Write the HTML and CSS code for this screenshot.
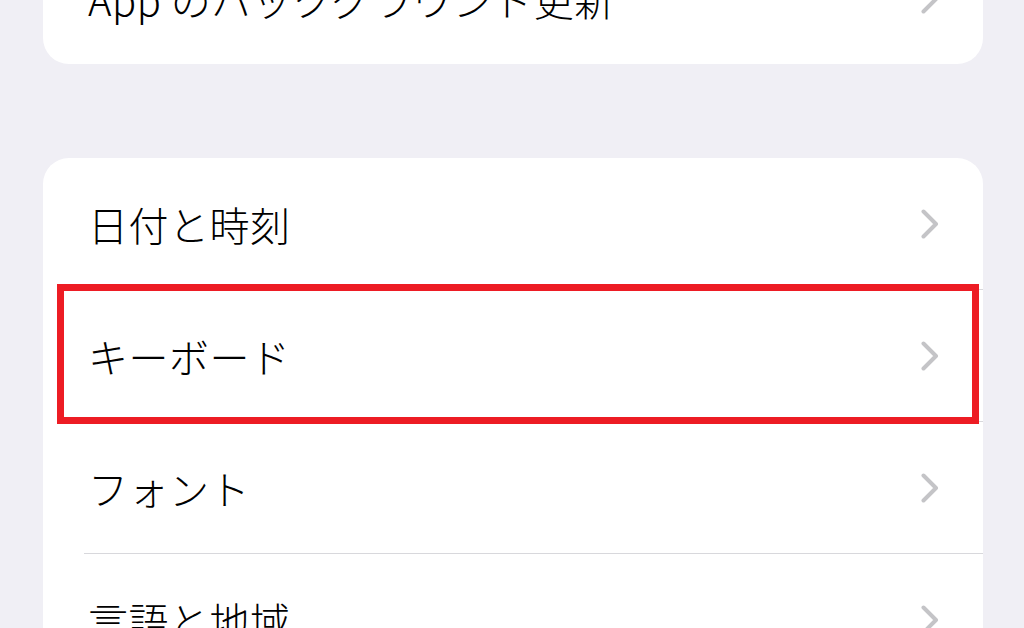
FILE: index.html
```html
<!DOCTYPE html>
<html lang="ja">
<head>
<meta charset="utf-8">
<title>設定</title>
<link rel="stylesheet" href="styles.css">
</head>
<body>
<div class="page">
  <div class="card card-top">
    <div class="row">
      <span class="label">App のバックグラウンド更新</span>
      <svg class="chev" viewBox="0 0 18 30" width="18" height="30"><path d="M2.5 2.5 L15 15 L2.5 27.5"/></svg>
    </div>
  </div>

  <div class="card card-main">
    <div class="row">
      <span class="label">日付と時刻</span>
      <svg class="chev" viewBox="0 0 18 30" width="18" height="30"><path d="M2.5 2.5 L15 15 L2.5 27.5"/></svg>
    </div>
    <div class="sep"></div>
    <div class="row">
      <span class="label">キーボード</span>
      <svg class="chev" viewBox="0 0 18 30" width="18" height="30"><path d="M2.5 2.5 L15 15 L2.5 27.5"/></svg>
    </div>
    <div class="sep"></div>
    <div class="row">
      <span class="label">フォント</span>
      <svg class="chev" viewBox="0 0 18 30" width="18" height="30"><path d="M2.5 2.5 L15 15 L2.5 27.5"/></svg>
    </div>
    <div class="sep"></div>
    <div class="row">
      <span class="label">言語と地域</span>
      <svg class="chev" viewBox="0 0 18 30" width="18" height="30"><path d="M2.5 2.5 L15 15 L2.5 27.5"/></svg>
    </div>
    <div class="highlight"></div>
  </div>
</div>
</body>
</html>
```

FILE: styles.css
```css
html, body {
  margin: 0;
  padding: 0;
  height: 100%;
  overflow: hidden;
  background: #f0eff5;
}

.page {
  padding: 0 41px 0 43px;
  display: flex;
  flex-direction: column;
  font-family: "Noto Sans CJK JP", "Noto Sans", sans-serif;
}

.card {
  background: #ffffff;
  border-radius: 26px;
  position: relative;
}

.card-top {
  margin-top: -67px;
}

.card-main {
  margin-top: 94px;
}

.row {
  height: 131px;
  display: flex;
  align-items: center;
  justify-content: space-between;
  padding: 0 44px 0 45px;
}

.label {
  font-size: 40px;
  font-weight: 300;
  line-height: 1.2;
  letter-spacing: 0.5px;
  color: #000000;
}

.chev {
  display: block;
  flex: none;
}

.chev path {
  fill: none;
  stroke: #c4c4c7;
  stroke-width: 4;
  stroke-linecap: round;
  stroke-linejoin: round;
}

.sep {
  height: 1px;
  margin-left: 41px;
  background: #d8d8dc;
}

.highlight {
  position: absolute;
  left: 14px;
  top: 126px;
  width: 922px;
  height: 140px;
  box-sizing: border-box;
  border: 7px solid #ed1c24;
}
```
